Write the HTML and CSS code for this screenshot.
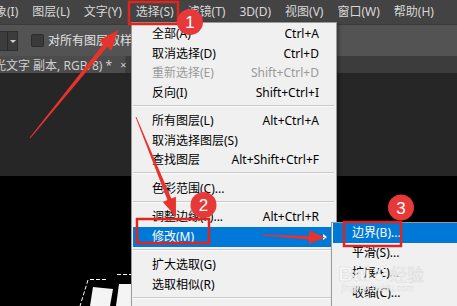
FILE: index.html
```html
<!DOCTYPE html>
<html lang="zh-CN">
  <head>
    <meta charset="utf-8" />
    <meta name="viewport" content="width=device-width, initial-scale=1" />
    <title>选择 - 修改 - 边界</title>
    <link rel="stylesheet" href="styles.css">
  </head>
  <body>
    <div class="app">
      <!-- top menu bar -->
      <div class="menubar">
        <span class="menu-item first">象(I)</span>
        <span class="menu-item">图层(L)</span>
        <span class="menu-item">文字(Y)</span>
        <span class="menu-item">选择(S)</span>
        <span class="menu-item">滤镜(T)</span>
        <span class="menu-item">3D(D)</span>
        <span class="menu-item">视图(V)</span>
        <span class="menu-item">窗口(W)</span>
        <span class="menu-item">帮助(H)</span>
      </div>

      <!-- tool options -->
      <div class="options">
        <div class="select"><span class="select-value"></span><span class="select-arrow"></span></div>
        <label class="check"><span class="box"></span>对所有图层取样</label>
      </div>

      <!-- document tabs -->
      <div class="tabs">
        <div class="tab"><span class="tab-title">光文字 副本, RGB/8) *</span><span class="close">×</span></div>
      </div>

      <div class="workspace">
        <div class="pasteboard"></div>
        <div class="canvas">
          <svg width="457" height="130" viewBox="0 0 457 130">
            <polygon points="93,111 113,113 110,130 90,130" fill="#f4f4f4" />
            <polygon points="119,108 131,108 131,130 116,130" fill="#f4f4f4" />
            <path d="M117 98.5 H131 M90 103.5 H107" stroke="#fff" stroke-dasharray="4 2" />
            <path d="M88 104 L80 130" stroke="#fff" stroke-dasharray="4 2" />
          </svg>
        </div>
      </div>

      <!-- Select menu -->
      <div class="dropdown">
        <div class="item"><span>全部(A)</span><span class="key">Ctrl+A</span></div>
        <div class="item"><span>取消选择(D)</span><span class="key">Ctrl+D</span></div>
        <div class="item disabled"><span>重新选择(E)</span><span class="key">Shift+Ctrl+D</span></div>
        <div class="item"><span>反向(I)</span><span class="key">Shift+Ctrl+I</span></div>
        <div class="sep"></div>
        <div class="item"><span>所有图层(L)</span><span class="key">Alt+Ctrl+A</span></div>
        <div class="item"><span>取消选择图层(S)</span></div>
        <div class="item"><span>查找图层</span><span class="key">Alt+Shift+Ctrl+F</span></div>
        <div class="sep"></div>
        <div class="item"><span>色彩范围(C)...</span></div>
        <div class="sep"></div>
        <div class="item"><span>调整边缘(F)...</span><span class="key">Alt+Ctrl+R</span></div>
        <div class="item hover"><span>修改(M)</span><span class="sub-arrow"></span></div>
        <div class="sep"></div>
        <div class="item"><span>扩大选取(G)</span></div>
        <div class="item"><span>选取相似(R)</span></div>
        <div class="sep"></div>
        <div class="item"><span>变换选区(T)</span></div>
      </div>

      <!-- Modify submenu -->
      <div class="submenu">
        <div class="item hover"><span>边界(B)...</span></div>
        <div class="item"><span>平滑(S)...</span></div>
        <div class="item"><span>扩展(E)...</span></div>
        <div class="item"><span>收缩(C)...</span></div>
      </div>

      <!-- red annotations drawn on top of the screenshot -->
      <svg class="notes" width="457" height="306" viewBox="0 0 457 306">
        <g class="mark">
          <text x="338" y="281" class="wm-big">Bai</text>
          <circle cx="376" cy="270" r="2" />
          <circle cx="382" cy="268" r="2" />
          <circle cx="385" cy="274" r="2" />
          <circle cx="379" cy="277" r="3.5" />
          <text x="390" y="281" class="wm-cn">经验</text>
          <text x="341" y="291" class="wm-small">jingyan.baidu.com</text>
        </g>

        <rect x="129" y="2" width="49" height="22" class="box" />
        <rect x="137" y="219" width="72" height="24" class="box" />
        <rect x="344" y="222" width="57" height="24" class="box" />

        <polygon class="arrow" points="30.4,138.3 107.2,47.1 111.5,50.6 118,30 99.1,40.4 103.4,43.9 29.6,137.7" />
        <polygon class="arrow" points="136.4,117 171.4,198.5 175.9,196.7 176,217 162.9,201.9 167.4,200.1 135.6,117.2" />
        <polygon class="arrow" points="262,234.5 309,236 309,230.5 325,237.5 309,244 309,239.5 262,235.5" />

        <circle cx="190" cy="22" r="13" class="dot" />
        <text x="190" y="28" class="num">1</text>
        <circle cx="203.5" cy="205" r="13" class="dot" />
        <text x="203.5" y="211" class="num">2</text>
        <circle cx="401" cy="207.5" r="13" class="dot" />
        <text x="401" y="213.5" class="num">3</text>
      </svg>
    </div>
  </body>
</html>
```

FILE: styles.css
```css
* {
  box-sizing: border-box;
}

body {
  margin: 0;
  background: #282828;
  font-family: "Noto Sans", "Noto Sans CJK SC", sans-serif;
  font-size: 12px;
}

.app {
  position: relative;
  width: 457px;
  height: 306px;
  overflow: hidden;
}

/* menu bar */
.menubar {
  display: flex;
  height: 24px;
  background: #434343;
  color: #d8d8d8;
  white-space: nowrap;
}

.menu-item {
  line-height: 24px;
  margin-right: 14px;
}

.menu-item.first {
  margin-left: -5px;
}

/* options bar */
.options {
  display: flex;
  align-items: center;
  height: 32px;
  background: #535353;
  border-top: 1px solid #3a3a3a;
  color: #e2e2e2;
}

.select {
  display: flex;
  width: 18px;
  height: 20px;
  margin-right: 13px;
  background: #3c3c3c;
  border: 1px solid #2e2e2e;
  border-left: 0;
}

.select-value {
  width: 8px;
  border-right: 1px solid #2a2a2a;
}

.select-arrow {
  flex: 1;
  position: relative;
}

.select-arrow::after {
  content: "";
  position: absolute;
  left: 2px;
  top: 8px;
  border: 3px solid transparent;
  border-top: 3px solid #d0d0d0;
}

.check {
  display: flex;
  align-items: center;
  line-height: 16px;
}

.check .box {
  width: 13px;
  height: 13px;
  margin-right: 4px;
  background: #3a3a3a;
  border: 1px solid #2c2c2c;
  border-radius: 2px;
}

/* document tabs */
.tabs {
  height: 17px;
  background: #3c3c3c;
  overflow: hidden;
}

.tab {
  display: flex;
  align-items: center;
  width: 125px;
  height: 17px;
  background: #4c4c4c;
  color: #d0d0d0;
  white-space: nowrap;
}

.tab-title {
  margin-left: -6px;
}

.close {
  margin-left: 8px;
  font-size: 11px;
}

.pasteboard {
  height: 103px;
  background: #262626;
}

.canvas {
  height: 130px;
  background: #000;
}

.canvas svg {
  display: block;
}

/* dropdown menus */
.dropdown,
.submenu {
  position: absolute;
  background: #f0f0f0;
  border: 1px solid #999;
  box-shadow: 2px 2px 3px rgba(0, 0, 0, 0.35);
  color: #000;
}

.dropdown {
  left: 131px;
  top: 22px;
  width: 206px;
  height: 300px;
  padding-top: 1.5px;
}

.dropdown .item {
  display: flex;
  justify-content: space-between;
  align-items: center;
  height: 19.5px;
  padding: 0 16px 0 19px;
  margin: 0 1px;
  white-space: nowrap;
}

.item span {
  line-height: 16px;
}

.item.disabled {
  color: #9a9a9a;
}

.item.hover {
  background: #0078d7;
  color: #fff;
}

.sep {
  height: 9px;
  padding-top: 2px;
}

.sep::before {
  content: "";
  display: block;
  margin: 0 2px 0 1px;
  border-top: 1px solid #cacaca;
  border-bottom: 1px solid #fbfbfb;
}

.sub-arrow {
  margin-right: -8px;
  border: 3.5px solid transparent;
  border-left: 4px solid #fff;
  border-right: 0;
}

.submenu {
  left: 331px;
  top: 222px;
  width: 140px;
  height: 90px;
}

.submenu .item {
  display: flex;
  align-items: center;
  height: 20px;
  padding-left: 19px;
  margin: 0 1px;
}

/* annotations */
.notes {
  position: absolute;
  left: 0;
  top: 0;
  pointer-events: none;
}

.box {
  fill: none;
  stroke: #e3241c;
  stroke-width: 2.5;
}

.arrow {
  fill: #e8332c;
}

.dot {
  fill: #e8393a;
}

.num {
  fill: #fff;
  font-family: "Liberation Sans", sans-serif;
  font-size: 17px;
  text-anchor: middle;
}

.mark {
  fill: #f6f6f6;
  stroke: #dcdcdc;
  stroke-width: 0.6;
}

.wm-big {
  font-family: "Liberation Sans", sans-serif;
  font-size: 21px;
  font-weight: bold;
}

.wm-cn {
  font-family: "Noto Sans CJK SC", sans-serif;
  font-size: 17px;
}

.wm-small {
  font-family: "Liberation Sans", sans-serif;
  font-size: 9px;
  stroke-width: 0.3;
}
```
